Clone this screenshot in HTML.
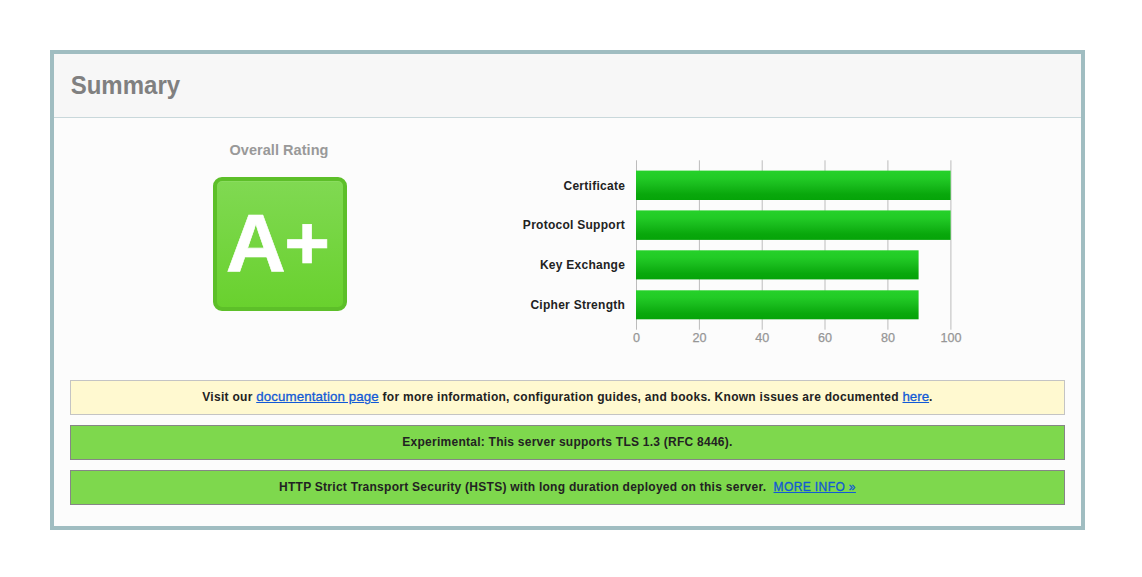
<!DOCTYPE html>
<html><head><meta charset="utf-8"><title>Summary</title>
<style>
html,body{margin:0;padding:0;background:#fff;}
body{width:1142px;height:577px;position:relative;overflow:hidden;font-family:"Liberation Sans",Arial,sans-serif;}
#panel{position:absolute;left:50px;top:50px;width:1027px;height:472px;border:4px solid #a0bdc1;background:#fcfcfc;}
#head{position:absolute;left:54px;top:54px;width:1027px;height:63px;background:#f7f7f7;border-bottom:1px solid #c9d8db;}
#head h1{position:absolute;left:17px;top:18px;margin:0;font-size:24px;line-height:28px;font-weight:bold;color:#808080;white-space:nowrap;transform:translate(-0.3px,0.45px) scaleY(1.08);transform-origin:0 22px;}
#rt{position:absolute;left:179px;top:141px;width:200px;text-align:center;font-size:14.5px;line-height:18px;font-weight:bold;color:#999;white-space:nowrap;letter-spacing:0.05px;}
#rbox{position:absolute;left:213px;top:177px;width:126px;height:126px;border:4px solid #5dbf29;border-radius:9px;background:linear-gradient(#80d952,#69d12e);box-shadow:inset 0 1px 0 rgba(255,255,255,0.08);color:#fff;font-weight:bold;font-size:80px;line-height:126px;white-space:nowrap;}
#rbox span{position:absolute;top:0;display:block;}
#rbox #rA{left:9.9px;-webkit-text-stroke:0.6px #fff;transform:translateY(-0.3px) scale(1.04,1.016);transform-origin:50% 90px;}
#rbox #rP{left:68.2px;top:-1.4px;-webkit-text-stroke:0.7px #fff;font-size:76px;transform:scaleX(1.03);}
#chart{position:absolute;left:0;top:0;width:1142px;height:577px;}
#chart text{font-family:"Liberation Sans",Arial,sans-serif;}
.lbl{font-size:12px;font-weight:bold;fill:#222;letter-spacing:0.265px;text-anchor:end;}
.ax{font-size:12.6px;fill:#969696;stroke:#969696;stroke-width:0.25px;text-anchor:middle;}
.msg{position:absolute;left:70px;width:993px;height:33px;line-height:33px;text-align:center;font-size:12px;font-weight:bold;color:#222;white-space:pre;}
.y{background:#fff9d0;border:1px solid #c4c4c4;letter-spacing:0.28px;line-height:31px;}
.g{background:#7ed84d;border:1px solid #868686;letter-spacing:0.25px;}
a{color:#1259d6;font-weight:normal;text-decoration:underline;-webkit-text-stroke:0.3px #1259d6;}
.y a{font-size:13.3px;letter-spacing:0.12px;}
.g a{letter-spacing:0.4px;}
</style></head><body>
<div id="panel"></div>
<div id="head"><h1>Summary</h1></div>
<div id="rt">Overall Rating</div>
<div id="rbox"><span id="rA">A</span><span id="rP">+</span></div>

<svg id="chart" width="1142" height="577" viewBox="0 0 1142 577">
 <defs>
  <linearGradient id="bg" x1="0" y1="0" x2="0" y2="1">
   <stop offset="0" stop-color="#26d12a"/>
   <stop offset="0.25" stop-color="#22cb26"/>
   <stop offset="0.5" stop-color="#18bb1c"/>
   <stop offset="0.8" stop-color="#09a80c"/>
   <stop offset="1" stop-color="#05a408"/>
  </linearGradient>
 </defs>
 <g fill="#bcbcbc">
  <rect x="636" y="160.3" width="1" height="169.4"/>
  <rect x="698.9" y="160.3" width="1" height="169.4"/>
  <rect x="761.7" y="160.3" width="1" height="169.4"/>
  <rect x="824.5" y="160.3" width="1" height="169.4"/>
  <rect x="887.4" y="160.3" width="1" height="169.4"/>
  <rect x="950.4" y="160.3" width="1" height="169.4"/>
 </g>
 <g fill="url(#bg)">
  <rect x="636" y="170.6" width="314.6" height="29.4"/>
  <rect x="636" y="210.4" width="314.6" height="29.5"/>
  <rect x="636" y="250.3" width="282.6" height="29.1"/>
  <rect x="636" y="290.3" width="282.6" height="29"/>
 </g>
 <text class="lbl" x="625.1" y="189.7">Certificate</text>
 <text class="lbl" x="625.1" y="229.4">Protocol Support</text>
 <text class="lbl" x="625.1" y="269.1">Key Exchange</text>
 <text class="lbl" x="625.1" y="308.9">Cipher Strength</text>
 <text class="ax" x="636.6" y="341.8">0</text>
 <text class="ax" x="699.4" y="341.8">20</text>
 <text class="ax" x="762.2" y="341.8">40</text>
 <text class="ax" x="825" y="341.8">60</text>
 <text class="ax" x="887.9" y="341.8">80</text>
 <text class="ax" x="951" y="341.8">100</text>
</svg>

<div class="msg y" style="top:380px">Visit our <a>documentation page</a> for more information, configuration guides, and books. Known issues are documented <a style="letter-spacing:0">here</a>.</div>
<div class="msg g" style="top:425px">Experimental: This server supports TLS 1.3 (RFC 8446).</div>
<div class="msg g" style="top:470px;letter-spacing:0.264px">HTTP Strict Transport Security (HSTS) with long duration deployed on this server.  <a>MORE INFO »</a></div>
</body></html>
